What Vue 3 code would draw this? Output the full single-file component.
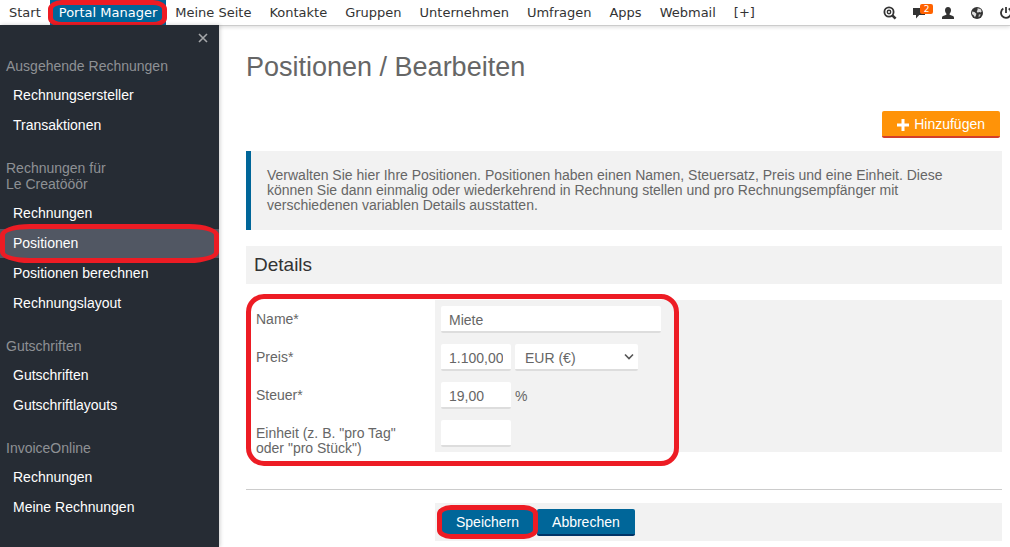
<script setup>
import { ref } from 'vue'

const navItems = ['Start', 'Portal Manager', 'Meine Seite', 'Kontakte', 'Gruppen', 'Unternehmen', 'Umfragen', 'Apps', 'Webmail', '[+]']
const activeNav = 'Portal Manager'

const groups = [
  { title: ['Ausgehende Rechnungen'], items: ['Rechnungsersteller', 'Transaktionen'] },
  { title: ['Rechnungen für', 'Le Creatööör'], items: ['Rechnungen', 'Positionen', 'Positionen berechnen', 'Rechnungslayout'] },
  { title: ['Gutschriften'], items: ['Gutschriften', 'Gutschriftlayouts'] },
  { title: ['InvoiceOnline'], items: ['Rechnungen', 'Meine Rechnungen'] },
]
const activeItem = 'Positionen'

const name = ref('Miete')
const price = ref('1.100,00')
const currency = ref('EUR')
const tax = ref('19,00')
const unit = ref('')
</script>

<template>
  <div class="page">
    <header class="topbar">
      <nav class="nav">
        <a v-for="item in navItems" :key="item" href="#" class="nav-link" :class="{ active: item === activeNav }">
          {{ item }}<span v-if="item === activeNav" class="ring ring-nav"></span>
        </a>
      </nav>
      <div class="tools">
        <button type="button" class="tool" aria-label="Suche">
          <svg viewBox="0 0 14 14" width="14" height="14">
            <circle cx="6" cy="6" r="4.6" fill="none" stroke="#333" stroke-width="1.8" />
            <circle cx="6" cy="6" r="1.7" fill="none" stroke="#333" stroke-width="1.4" />
            <path d="M9.3 9.3l3.3 3.3" stroke="#333" stroke-width="2.6" />
          </svg>
        </button>
        <button type="button" class="tool" aria-label="Nachrichten">
          <svg viewBox="0 0 14 14" width="14" height="14">
            <path d="M1 2h12v7H7.2L4 12.6V9H1z" fill="#333" />
          </svg>
          <span class="badge">2</span>
        </button>
        <button type="button" class="tool" aria-label="Profil">
          <svg viewBox="0 0 14 14" width="14" height="14">
            <path d="M7 1c2 0 3 1.300 3 3.200 0 1.600-.7 2.700-1.400 3.500v1.100l3.300 1.300c.8.400 1.100.9 1.100 1.700V13H1v-1.200c0-.8.300-1.300 1.100-1.700l3.300-1.300V7.700C4.700 6.900 4 5.800 4 4.200 4 2.300 5 1 7 1z" fill="#333" />
          </svg>
        </button>
        <button type="button" class="tool" aria-label="Sprache">
          <svg viewBox="0 0 14 14" width="14" height="14">
            <circle cx="7" cy="7" r="6" fill="#333" />
            <path d="M7.500 2.200l3 .9 1.200 2.200-.9 1.200-1.600-.6-1.500.8-1-1.400.9-1.200zM2.200 5.500l2.300.6 1.900 1.700-.5 1.700-1 1.800-1.100-1.700L2 8z" fill="#ddd" />
            <path d="M8.800 8.500l1.900-.3-.7 2-1.500 1z" fill="#bbb" />
          </svg>
        </button>
        <button type="button" class="tool" aria-label="Abmelden">
          <svg viewBox="0 0 14 14" width="14" height="14">
            <path d="M4.300 2.600a5 5 0 1 0 5.400 0" fill="none" stroke="#333" stroke-width="1.800" />
            <path d="M7 1v6" stroke="#333" stroke-width="1.800" />
          </svg>
        </button>
      </div>
    </header>

    <div class="body">
      <aside class="sidebar">
        <button type="button" class="close" aria-label="Schließen">
          <svg viewBox="0 0 10 10" width="10" height="10"><path d="M1 1l8 8M9 1L1 9" stroke="#a5a7aa" stroke-width="1.600" /></svg>
        </button>
        <section v-for="group in groups" :key="group.title[0]" class="group">
          <h2><span v-for="line in group.title" :key="line">{{ line }}</span></h2>
          <a v-for="item in group.items" :key="item" href="#" class="side-link" :class="{ active: item === activeItem }">
            {{ item }}<span v-if="item === activeItem" class="ring ring-side"></span>
          </a>
        </section>
      </aside>

      <main class="main">
        <h1>Positionen / Bearbeiten</h1>
        <div class="actions">
          <button type="button" class="btn add">
            <svg viewBox="0 0 12 12" width="12" height="12"><path d="M6 0v12M0 6h12" stroke="#fff" stroke-width="3" /></svg>
            Hinzufügen
          </button>
        </div>
        <p class="info">
          Verwalten Sie hier Ihre Positionen. Positionen haben einen Namen, Steuersatz, Preis und eine Einheit. Diese können Sie dann einmalig oder wiederkehrend in Rechnung stellen und pro Rechnungsempfänger mit verschiedenen variablen Details ausstatten.
        </p>
        <h3>Details</h3>
        <form @submit.prevent>
          <div class="form">
            <div class="labels">
              <label for="name">Name*</label>
              <label for="price">Preis*</label>
              <label for="tax">Steuer*</label>
              <label for="unit">Einheit (z. B. "pro Tag" oder "pro Stück")</label>
            </div>
            <div class="fields">
              <div class="field"><input id="name" v-model="name" type="text" class="wide"></div>
              <div class="field">
                <input id="price" v-model="price" type="text">
                <span class="select">
                  <select v-model="currency" aria-label="Währung"><option value="EUR">EUR (€)</option></select>
                  <svg viewBox="0 0 10 8" width="10" height="8"><path d="M1 1.500l4 4 4-4" fill="none" stroke="#555" stroke-width="1.600" /></svg>
                </span>
              </div>
              <div class="field"><input id="tax" v-model="tax" type="text"><span class="suffix">%</span></div>
              <div class="field"><input id="unit" v-model="unit" type="text"></div>
            </div>
            <span class="ring ring-form"></span>
          </div>
          <div class="footer">
            <div class="buttons">
              <span class="marked"><button type="submit" class="btn">Speichern</button><span class="ring ring-save"></span></span>
              <button type="button" class="btn">Abbrechen</button>
            </div>
          </div>
        </form>
      </main>
    </div>
  </div>
</template>

<style>
html, body { margin: 0; overflow: hidden; background: #fff; }
</style>

<style scoped>
* { box-sizing: border-box; }
.page {
  min-height: 100vh;
  display: flex;
  flex-direction: column;
  font-family: "Liberation Sans", Arial, sans-serif;
  font-size: 14px;
  line-height: 15px;
  color: #666;
}
button, input, select { font: inherit; margin: 0; border: 0; }
a { text-decoration: none; }
.topbar {
  position: relative;
  z-index: 2;
  display: flex;
  justify-content: space-between;
  height: 25px;
  background: #fff;
  box-shadow: 0 1px 0 #ccc, 0 2px 4px rgba(0, 0, 0, 0.15);
  font-family: "DejaVu Sans", Verdana, sans-serif;
  font-size: 13px;
}
.nav { display: flex; }
.nav-link {
  position: relative;
  padding: 0 9px;
  line-height: 25px;
  color: #333;
  white-space: nowrap;
}
.nav-link.active { background: #069; color: #fff; }
.tools { display: flex; flex: none; align-items: center; gap: 15px; margin-right: -3px; }
.tool { position: relative; display: flex; padding: 0; background: none; }
.badge {
  position: absolute;
  left: 8px;
  top: -2px;
  width: 13px;
  height: 10px;
  border-radius: 2px;
  background: #ff6200;
  color: #fff;
  font: 9px/10px "DejaVu Sans", sans-serif;
  text-align: center;
}
.body { flex: 1; display: flex; }
.sidebar {
  position: relative;
  z-index: 3;
  flex: none;
  width: 219px;
  background: #262c34;
  box-shadow: 1px 0 4px rgba(0, 0, 0, 0.2);
}
.close { display: block; margin: 8px 11px 15px auto; padding: 0; background: none; height: 10px; }
.close svg { display: block; }
.group { margin-bottom: 20px; }
.group:last-child { margin-bottom: 0; }
h2 { margin: 0 0 7px; padding-left: 6px; font-size: 14px; font-weight: normal; line-height: 16px; color: #8e9195; }
h2 span { display: block; }
.side-link {
  position: relative;
  display: block;
  margin-bottom: 1px;
  padding-left: 13px;
  line-height: 29px;
  color: #fff;
}
.side-link.active { background: #515763; }
.main { flex: 1; min-width: 0; padding: 26px 8px 0 27px; }
h1 { margin: 0; font-size: 27px; font-weight: normal; line-height: 32px; }
.actions { display: flex; justify-content: flex-end; margin: 28px 2px 13px 0; }
.btn {
  display: flex;
  align-items: center;
  height: 27px;
  padding: 2px 15px 0;
  border-bottom: 2px solid #036;
  border-radius: 2px;
  background: #069;
  color: #fff;
}
.add { gap: 5px; background: #ff9308; border-color: #d43f2a; }
.info { margin: 0 0 16px; padding: 17px 24px 17px 16px; border-left: 5px solid #069; background: #f2f2f2; }
h3 { margin: 0 0 16px; padding: 0 8px; background: #f2f2f2; font-size: 19px; font-weight: normal; line-height: 38px; color: #333; }
.form { position: relative; display: flex; align-items: flex-start; }
.labels { flex: none; width: 189px; padding-left: 10px; }
label { display: block; min-height: 38px; padding: 12px 20px 0 0; }
.fields { flex: 1; background: #f2f2f2; }
.field { display: flex; align-items: center; gap: 4px; padding: 6px 6px 5px; }
input, select {
  height: 27px;
  border-bottom: 2px solid #ddd;
  border-radius: 2px;
  background: #fff;
  color: #666;
  outline: none;
}
input { width: 70px; padding: 2px 8px 0; }
.wide { width: 220px; }
.suffix { padding-top: 2px; }
.select { position: relative; display: flex; }
select { width: 123px; padding: 3px 10px 0; appearance: none; }
.select svg { position: absolute; right: 4px; top: 9px; pointer-events: none; }
.footer { margin-top: 33px; padding-top: 13px; border-top: 1px solid #ccc; }
.buttons { display: flex; gap: 3px; margin-left: 189px; padding: 6px 6px 5px; background: #f2f2f2; }
.marked { position: relative; }
.ring { position: absolute; z-index: 4; border: 5px solid #ed1c24; pointer-events: none; }
.ring-nav { inset: 0 -1px -2px -2px; border-radius: 14px / 9px; }
.ring-side { inset: -5px 0; border-radius: 30px / 11px; }
.ring-form { top: -6px; bottom: -10px; left: 0; width: 433px; border-radius: 18px; }
.ring-save { inset: -4px -4px -3px -4px; border-radius: 14px / 9px; }
</style>
